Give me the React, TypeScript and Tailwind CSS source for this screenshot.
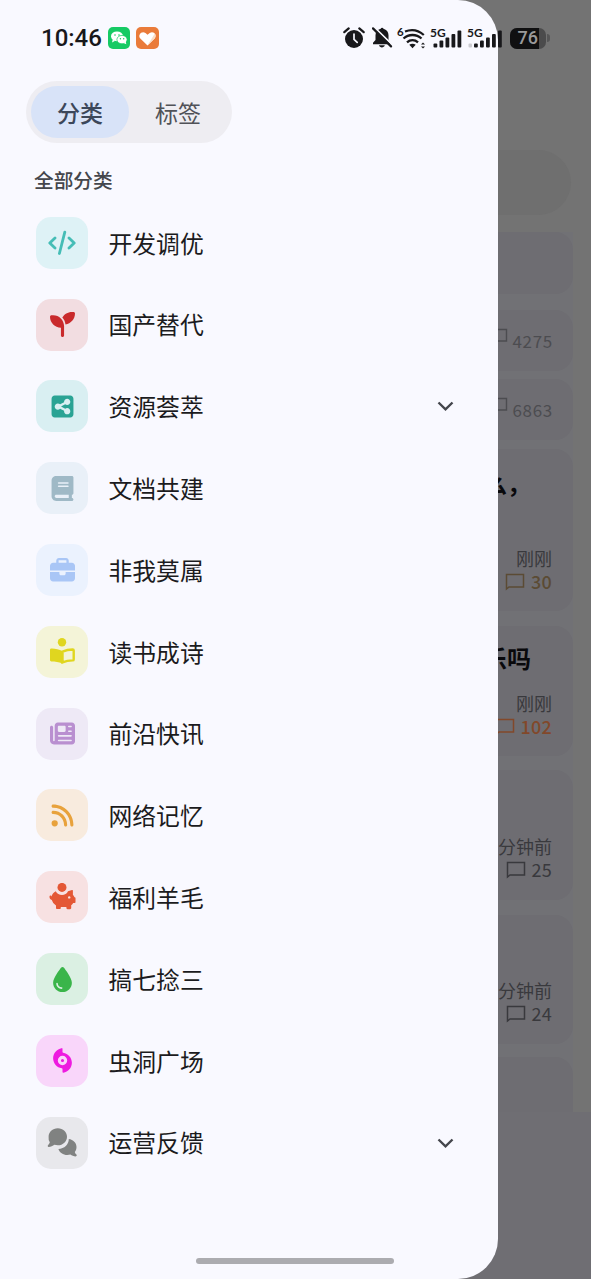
import React from "react";
import {
  FaBook,
  FaBriefcase,
  FaDroplet,
  FaHurricane,
  FaNewspaper,
  FaRss,
  FaSeedling,
  FaSquareShareNodes,
} from "react-icons/fa6";
import { clsx } from "clsx";

type Category = {
  name: string;
  icon: React.ComponentType<{ size?: number }>;
  tile: string;
  expandable?: boolean;
};

function CodeIcon() {
  return (
    <svg width="28" height="28" viewBox="0 0 28 28" fill="none" stroke="currentColor" strokeWidth="2.8" strokeLinecap="round" strokeLinejoin="round">
      <path d="M7 9 1.800 14 7 19M21 9l5.200 5-5.200 5M16.800 3.200l-5.400 21.300" />
    </svg>
  );
}

function ReaderIcon() {
  return (
    <svg width="28" height="28" viewBox="0 0 28 28" fill="currentColor">
      <circle cx="14" cy="4.2" r="4.2" />
      <path d="M14.500 13.200C11 11 7 10.300 3.300 10.400c-.8 0-1.300.6-1.300 1.300v10.400c0 .8.6 1.300 1.300 1.300 4 0 7.500.5 10.700 1.900h1Z" />
      <path d="M14.500 13.600c3.500-1.500 7-2.100 10.200-2.100.6 0 1 .4 1 1v8.900c0 .6-.4 1-1 1-3.700 0-7 .6-10.200 1.900Z" fill="none" stroke="currentColor" strokeWidth="2.400" />
    </svg>
  );
}

function PiggyIcon() {
  return (
    <svg width="28" height="28" viewBox="0 0 28 28" fill="currentColor">
      <circle cx="14" cy="4.400" r="4.500" />
      <path d="M7.800 8.300C9 10.800 11.300 12 14 12s4.900-1.200 6-3.800l4-1.200c.5-.2.9.2.9.6v4.200c.7.700 1.200 1.500 1.600 2.400h.2c.5 0 .8.4.8.8v4.200c0 .5-.3.8-.8.8h-1.500c-.5.8-1.200 1.600-2 2.200v2.900c0 .6-.5 1.100-1.100 1.100h-2.600c-.6 0-1.100-.5-1.100-1.100V24h-5.600v.900c0 .6-.5 1.100-1.100 1.100H9.100c-.6 0-1.100-.5-1.100-1.100v-2.500a8.500 8.500 0 0 1-4.200-5.400c-1.300-.3-2.300-1.500-2.300-3v-.4c0-.6.4-1 .9-1s1 .4 1 1v.2c.6-2.400 2.200-4.300 4.400-5.500Z" />
      <circle cx="21.200" cy="14.400" r="1.200" fill="#f7e1e2" />
    </svg>
  );
}

function CommentsIcon() {
  return (
    <svg className="overflow-visible" width="28" height="28" viewBox="0 0 28 28" fill="currentColor">
      <path d="M9.800-.8C15.100-.8 19 3 19 7.700s-3.900 8.600-9.200 8.600c-1.200 0-2.300-.2-3.400-.5-1.500 1.200-3.700 2.100-5.700 2.100-1 0-1.300-1-.7-1.700.8-.8 1.600-1.900 1.800-3A8.200 8.200 0 0 1 .6 7.700C.6 3 4.500-.8 9.800-.8Z" />
      <path d="M20.800 9.900c4.400.6 7.700 3.800 7.700 8 0 2-.6 3.700-1.700 5 .2 1.100.8 1.900 1.600 2.700.7.7.3 1.800-.7 1.800-2 0-3.900-.8-5.300-1.900-1 .3-2 .5-3.100.5-4.200 0-7.800-2.500-8.900-6 6-.4 10.400-4.700 10.400-10.100Z" />
    </svg>
  );
}

const categories: Category[] = [
  { name: "开发调优", icon: CodeIcon, tile: "bg-[#def2f6] text-[#45bdb6]" },
  { name: "国产替代", icon: FaSeedling, tile: "bg-[#f2dde1] text-[#c92a2c]" },
  { name: "资源荟萃", icon: FaSquareShareNodes, tile: "bg-[#d9eff2] text-[#2aa394]", expandable: true },
  { name: "文档共建", icon: FaBook, tile: "bg-[#e9f0f8] text-[#9fb9c6]" },
  { name: "非我莫属", icon: FaBriefcase, tile: "bg-[#ebf2fe] text-[#a9c6f6]" },
  { name: "读书成诗", icon: ReaderIcon, tile: "bg-[#f4f4d8] text-[#e0d61f]" },
  { name: "前沿快讯", icon: FaNewspaper, tile: "bg-[#eee9f6] text-[#b98fd0]" },
  { name: "网络记忆", icon: FaRss, tile: "bg-[#f8ebde] text-[#e8a23c]" },
  { name: "福利羊毛", icon: PiggyIcon, tile: "bg-[#f7e1e2] text-[#e45735]" },
  { name: "搞七捻三", icon: FaDroplet, tile: "bg-[#dbf0e3] text-[#3ab54a]" },
  { name: "虫洞广场", icon: FaHurricane, tile: "bg-[#f9d6fa] text-[#ee1be0]" },
  { name: "运营反馈", icon: CommentsIcon, tile: "bg-[#e8e8ec] text-[#808281]", expandable: true },
];

function Signal({ dim }: { dim?: boolean }) {
  return (
    <svg className="overflow-visible" width="33" height="24" viewBox="0 0 33 24" fill="#18181b">
      <text x="0" y="10.5" fontSize="12" fontWeight="700" fontFamily="Lato, sans-serif">5G</text>
      {dim && <rect x="1.500" y="17.500" width="3.500" height="4" rx="1" opacity=".2" />}
      <g transform={dim ? "translate(3.5 0)" : undefined}>
        <rect x="3.500" y="17.500" width="3.800" height="4" rx="1" />
        <rect x="9.500" y="14.500" width="3.800" height="7" rx="1" />
        <rect x="15.500" y="11.500" width="3.800" height="10" rx="1" />
        <rect x="21.500" y="8" width="3.800" height="13.500" rx="1" />
        <rect x="27.500" y="4.500" width="3.800" height="17" rx="1" />
      </g>
    </svg>
  );
}

function StatusBar() {
  return (
    <div className="absolute inset-x-0 top-0 flex h-[76px] items-center pl-[41px] text-[#18181b]">
      <span className="w-[67px] font-[Roboto] text-2xl font-medium">10:46</span>
      <svg width="22" height="22" viewBox="0 0 22 22">
        <rect width="22" height="22" rx="5" fill="#16ca64" />
        <ellipse cx="9" cy="9.3" rx="6" ry="4.9" fill="#fff" />
        <path d="M4.7 12.5 4 15.5l3.2-1.7Z" fill="#fff" />
        <ellipse cx="14" cy="12.6" rx="5.1" ry="4.2" fill="#fff" stroke="#16ca64" strokeWidth=".7" />
        <path d="m15.5 16 2.8 1.3-.6-2.8Z" fill="#fff" />
        <g fill="#16ca64">
          <circle cx="7" cy="8" r=".8" />
          <circle cx="11" cy="8" r=".8" />
          <circle cx="12.4" cy="11.7" r=".7" />
          <circle cx="15.7" cy="11.7" r=".7" />
        </g>
      </svg>
      <svg className="ml-[6px]" width="23" height="22" viewBox="0 0 23 22">
        <rect width="23" height="22" rx="5" fill="#ea7b3a" />
        <path d="M11.5 18.5 4.3 11.4C1.4 8.1 5.7 3.2 9.5 6l2 1.8L13.7 6c3.8-2.7 7.8 2 4.9 5.4Z" fill="#fff" />
        <path d="m11.5 18.5 7.1-7.1c1.4-1.6 1.2-3.6.2-4.9Z" fill="#fbdcc5" />
      </svg>

      <div className="ml-[184px] flex items-center">
        <svg width="22" height="22" viewBox="0 0 22 22">
          <circle cx="11" cy="12" r="9" fill="#18181b" />
          <path d="M1.3 5.2 5.7 1.4M20.7 5.2l-4.4-3.8" stroke="#18181b" strokeWidth="2.2" strokeLinecap="round" />
          <path d="M11 7v5.3l3.2 3" fill="none" stroke="#f9f9ff" strokeWidth="1.7" strokeLinecap="round" />
        </svg>
        <svg className="ml-[7px]" width="22" height="22" viewBox="0 0 22 22" fill="#18181b">
          <path d="M8.700 1.800c.4-1.300 2.400-1.300 2.800 0 3 .8 5 3.200 5 6.500V13l2 2.800v1.400H1v-1.400L3.500 13V8.300c0-3.300 1.900-5.700 5.200-6.500ZM7 18.300h5.800c-.6 2.800-5.200 2.800-5.800 0Z" />
          <path d="M1.500-.5 21 18.500" stroke="#f9f9ff" strokeWidth="1.800" />
          <path d="m1 1.400 18 18" stroke="#18181b" strokeWidth="2.200" strokeLinecap="round" />
        </svg>
        <svg className="ml-[3px] overflow-visible" width="29" height="24" viewBox="0 0 29 24" fill="#18181b">
          <text x="0" y="9.5" fontSize="11.500" fontWeight="700" fontFamily="Lato, sans-serif">6</text>
          <g fill="none" stroke="#18181b" strokeWidth="2.3">
            <path d="M8 5.500c6.500-2.600 13.500-1.300 18.800 3.500" />
            <path d="M6.500 12.500c5.100-4.700 12.900-4.700 18 0" />
            <path d="M10 16.300c3.200-2.900 7.800-2.900 11 0" />
          </g>
          <path d="M12.300 18.800c1.800-1.400 4.600-1.400 6.400 0l-3.200 3.500Z" />
          <path d="m24 18.500 2-2 2 2ZM24 20.500l2 2 2-2Z" />
        </svg>
        <div className="ml-1 flex gap-1">
          <Signal />
          <Signal dim />
        </div>
        <div className="ml-[10px] flex items-center">
          <div className="flex h-[21px] w-[36px] overflow-hidden rounded-[7px] bg-[#4b4b4c]">
            <div className="flex w-[29px] items-center justify-end bg-[#101011] pr-px font-[Roboto] text-lg leading-none font-medium text-[#9a9a9a]">76</div>
          </div>
          <div className="ml-px h-2 w-[3px] rounded-r-full bg-[#555556]" />
        </div>
      </div>
    </div>
  );
}

function CommentCount({ count, className }: { count: string; className?: string }) {
  return (
    <div className={clsx("flex items-center justify-end gap-[6px] text-[18px] leading-[23px]", className)}>
      <svg width="20" height="18" viewBox="0 0 20 18" fill="none" stroke="currentColor" strokeWidth="1.5">
        <path d="M1.500 16V1.500h17v12.500H4Z" />
      </svg>
      <span>{count}</span>
    </div>
  );
}

function Post({ title, time, count, className, countClass }: {
  title?: string;
  time: string;
  count: string;
  className: string;
  countClass?: string;
}) {
  return (
    <div className={clsx("flex flex-col rounded-[18px] bg-[#6e6d72] pr-[21px] text-right text-[#39393d]", className)}>
      {title && <div className="pr-[21px] text-2xl leading-[34px] font-bold text-[#09090c]">{title}</div>}
      <div className="mt-auto text-[18px] leading-[24px]">{time}</div>
      <CommentCount count={count} className={clsx("tracking-[0.2px]", countClass)} />
    </div>
  );
}

function MutedCount({ count }: { count: string }) {
  return (
    <div className="flex h-[61px] items-center justify-end gap-1 rounded-[18px] bg-[#6e6d72] pr-5 text-[17px] tracking-[0.7px] text-[#4c4c50]">
      <svg className="-mt-[9px]" width="17" height="16" viewBox="0 0 17 16" fill="none" stroke="currentColor" strokeWidth="1.4">
        <path d="M1 15V1.500h14.500V13H3Z" />
      </svg>
      <span>{count}</span>
    </div>
  );
}

function Feed() {
  return (
    <div className="flex h-full flex-col bg-[#737373] pt-[150px]">
      <div className="mx-5 h-[65px] shrink-0 rounded-full bg-[#6f6f6f]" />
      <div className="mx-[18px] mt-[17px] flex shrink-0 flex-col bg-[#717175]">
        <div className="mb-4 h-[62px] rounded-[18px] bg-[#6e6d72]" />
        <MutedCount count="4275" />
        <div className="mt-[8px]">
          <MutedCount count="6863" />
        </div>
        <Post title="大家都在用什么，" time="刚刚" count="30" className="mt-[9px] h-[162px] pt-[17px] pb-[18px]" countClass="text-[#5b4b34] font-medium" />
        <Post title="今天大家快乐吗" time="刚刚" count="102" className="mt-[15px] h-[130px] pt-[15px] pb-[18px]" countClass="text-[#82482a] font-medium" />
        <Post time="1 分钟前" count="25" className="mt-[14px] h-[130px] pb-[19px]" />
        <Post time="1 分钟前" count="24" className="mt-[15px] h-[129px] pb-[19px]" />
        <div className="mt-[13px] h-[55px] rounded-t-[18px] bg-[#6e6d72]" />
      </div>
      <div className="flex-1 bg-[#6f6e73]" />
    </div>
  );
}

function CategoryRow({ category }: { category: Category }) {
  const Icon = category.icon;
  return (
    <li className="flex h-[81.8px] items-center pr-[43px] pl-9">
      <div className={clsx("flex size-[52px] items-center justify-center rounded-[15px]", category.tile)}>
        <Icon size={25} />
      </div>
      <span className="-mt-px ml-[20.500px] text-[23.800px] text-[#1b1b20]">{category.name}</span>
      {category.expandable && (
        <svg className="ml-auto" width="19" height="12" viewBox="0 0 19 12" fill="none" stroke="#44464c" strokeWidth="2.400">
          <path d="m2.500 2.500 7 6.800 7-6.800" />
        </svg>
      )}
    </li>
  );
}

function Drawer() {
  return (
    <aside className="absolute inset-y-0 left-0 flex w-[497.5px] flex-col rounded-r-[40px] bg-[#f9f9ff] pt-[81px]">
      <div className="ml-[26px] flex h-[62px] w-[206px] items-center rounded-full bg-[#eeedf2] p-[5px] text-[23px]">
        <button className="h-[52px] w-[98px] rounded-full bg-[#d8e3f8] font-medium text-[#3c475a]">分类</button>
        <button className="h-[52px] flex-1 text-[#505258]">标签</button>
      </div>
      <h2 className="mt-[22px] ml-[34px] text-[19.700px] leading-[30px] font-medium text-[#44464c]">全部分类</h2>
      <ul className="mt-[7px]">
        {categories.map((category) => (
          <CategoryRow key={category.name} category={category} />
        ))}
      </ul>
      <div className="absolute bottom-[15px] left-[196px] h-[6px] w-[198px] rounded-full bg-[#acacb0]" />
    </aside>
  );
}

export default function App() {
  return (
    <div className="relative h-[1279px] w-[591px] overflow-hidden font-['Noto_Sans_CJK_SC',sans-serif]">
      <Feed />
      <Drawer />
      <StatusBar />
    </div>
  );
}
